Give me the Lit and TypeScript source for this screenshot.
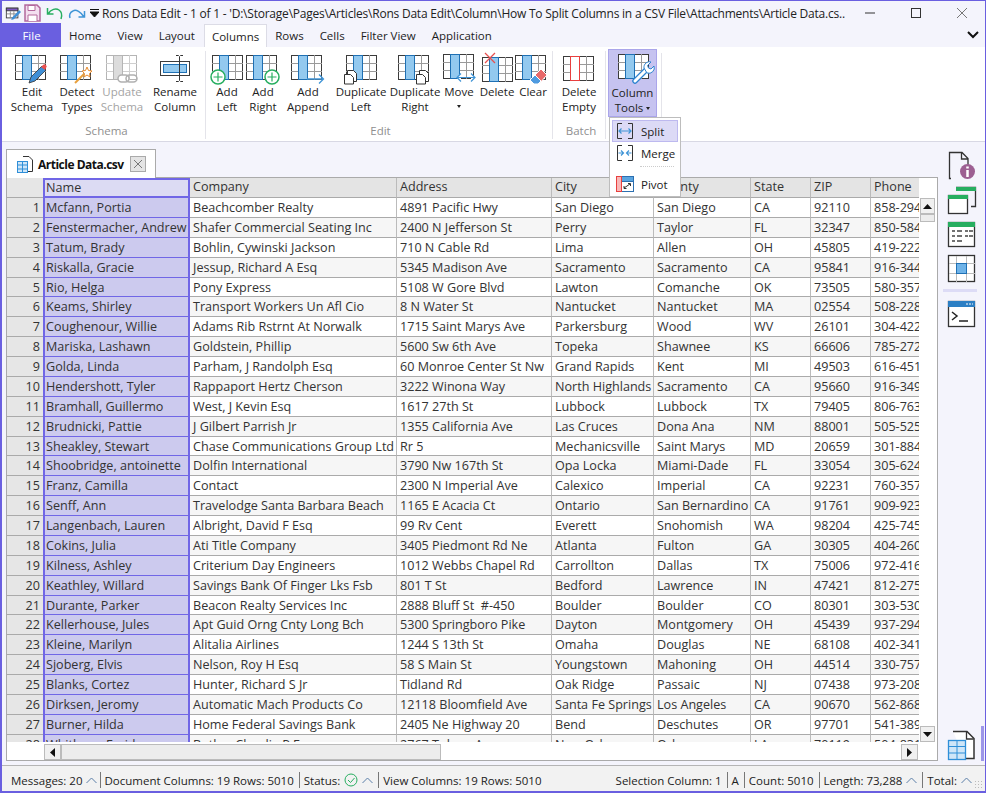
import { css, html, LitElement, svg } from 'lit';
import { customElement } from 'lit/decorators.js';

// one table icon: dark frame, grey cell lines, one highlighted column
const table = (x = 2, y = 2, frame = '#3c3c3c', fill = '#93c9ef', edge = '#1f70b4', lines = '#9a9a9a') => svg`
  <rect x=${x + 0.5} y=${y + 0.5} width="30" height="24" fill="#fff" stroke=${frame}></rect>
  <path d="M${x} ${y + 8.5}h31M${x} ${y + 16.5}h31M${x + 23.5} ${y}v25" stroke=${lines} fill="none"></path>
  <rect x=${x + 7.5} y=${y + 0.5} width="9" height="24" fill=${fill} stroke=${edge}></rect>`;

const ICONS: Record<string, unknown> = {
  edit: svg`${table(1, 2)}
    <g transform="translate(-4,-1)">
      <path d="M19 31l2-6 11-11 4 4-11 11z" fill="#3f8fd6" stroke="#333" stroke-width=".8"></path>
      <path d="M31 15l2-2a1.500 1.500 0 0 1 3 3l-1 2z" fill="#e8504f"></path>
    </g>`,
  detect: svg`${table(1, 2)}
    <path d="M16 30l9-9" stroke="#e8a13f" stroke-width="2"></path>
    <path d="M28 14l1.500 3.500 3.500.5-2.500 2.500.5 3.500-3-2-3 2 .5-3.500L23 18l3.500-.5z" fill="#fff" stroke="#e88a2c"></path>`,
  update: svg`${table(2, 2, '#b5b5b5', '#dcdcdc', '#b5b5b5', '#cfcfcf')}
    <rect x="14" y="22" width="11" height="7" rx="3.500" fill="#fff" stroke="#b0b0b0" stroke-width="1.500"></rect>
    <rect x="22" y="22" width="11" height="7" rx="3.500" fill="none" stroke="#b0b0b0" stroke-width="1.500"></rect>`,
  rename: svg`<rect x="3.500" y="8.500" width="29" height="14" fill="#fff" stroke="#3c3c3c"></rect>
    <rect x="6.500" y="11.500" width="23" height="8" fill="#93c9ef" stroke="#1f70b4"></rect>
    <path d="M19 2.500h2.500l1 1 1-1H26M22.500 4v23M19 28.500h2.500l1-1 1 1H26" fill="none" stroke="#333" stroke-width="1"></path>`,
  addLeft: svg`${table(3, 2)}
    <circle cx="9" cy="24" r="7" fill="#fff" stroke="#27ae60" stroke-width="1.500"></circle>
    <path d="M9 19.500v9M4.500 24h9" stroke="#27ae60" stroke-width="1.200"></path>`,
  addRight: svg`${table(1, 2)}
    <circle cx="27" cy="24" r="7" fill="#fff" stroke="#27ae60" stroke-width="1.500"></circle>
    <path d="M27 19.500v9M22.500 24h9" stroke="#27ae60" stroke-width="1.200"></path>`,
  append: svg`${table(1, 2)}
    <path d="M17 26h16M29 21.500l4.500 4.500-4.500 4.500" fill="none" stroke="#3f94d6" stroke-width="1.300"></path>`,
  dupLeft: svg`${table(3, 2)}
    <path d="M4.500 17.500h6l3 3v8h-9z" fill="#fff" stroke="#333"></path>
    <path d="M1.500 21.500h6l3 3v6.500h-9z" fill="#fff" stroke="#333"></path>`,
  dupRight: svg`${table(1, 2)}
    <path d="M22.500 17.500h6l3 3v8h-9z" fill="#fff" stroke="#333"></path>
    <path d="M19.500 21.500h6l3 3v6.500h-9z" fill="#fff" stroke="#333"></path>`,
  move: svg`${table(2, 1)}
    <path d="M16 24.500h18M20 20.500l-4 4 4 4M30 20.500l4 4-4 4" fill="#fff" stroke="#3f94d6" stroke-width="1.200"></path>`,
  del: svg`${table(3, 4)}
    <path d="M6 0l10 10M16 0L6 10" stroke="#e8504f" stroke-width="1.300"></path>`,
  clear: svg`${table(0, 2)}
    <path d="M15 27l11-11 6 6-8 9h-5z" fill="#e8696a" stroke="#fff"></path>
    <path d="M15 27l5-5 6 6-3 3h-4z" fill="#4f9be0" stroke="#fff"></path>`,
  empty: svg`${table(2, 3, '#3c3c3c', '#fff', '#e8403f')}`,
  tools: svg`${table(3, 0)}
    <path d="M20 27l11-11" stroke="#2c83d0" stroke-width="5.500" stroke-linecap="round"></path>
    <path d="M20 27l11-11" stroke="#fff" stroke-width="3" stroke-linecap="round"></path>
    <path d="M29 14a5.500 5.500 0 0 1 7-6l-3.500 3.500 1 2.500 2.500 1 3-3a5.500 5.500 0 0 1-7 7z" fill="#fff" stroke="#2c83d0"></path>`,
};

type Btn = { icon: string; lines: string[]; w: number; off?: boolean; caret?: boolean };

const GROUPS: { label: string; cls: string; items: Btn[] }[] = [
  {
    label: 'Schema',
    cls: 'schema',
    items: [
      { icon: 'edit', lines: ['Edit', 'Schema'], w: 48 },
      { icon: 'detect', lines: ['Detect', 'Types'], w: 42 },
      { icon: 'update', lines: ['Update', 'Schema'], w: 48, off: true },
      { icon: 'rename', lines: ['Rename', 'Column'], w: 58 },
    ],
  },
  {
    label: 'Edit',
    cls: 'edits',
    items: [
      { icon: 'addLeft', lines: ['Add', 'Left'], w: 36 },
      { icon: 'addRight', lines: ['Add', 'Right'], w: 36 },
      { icon: 'append', lines: ['Add', 'Append'], w: 54 },
      { icon: 'dupLeft', lines: ['Duplicate', 'Left'], w: 52 },
      { icon: 'dupRight', lines: ['Duplicate', 'Right'], w: 56 },
      { icon: 'move', lines: ['Move'], w: 32, caret: true },
      { icon: 'del', lines: ['Delete'], w: 44 },
      { icon: 'clear', lines: ['Clear'], w: 28 },
    ],
  },
  {
    label: 'Batch',
    cls: 'batch',
    items: [{ icon: 'empty', lines: ['Delete', 'Empty'], w: 44 }],
  },
];

const HEAD = ['Name', 'Company', 'Address', 'City', 'County', 'State', 'ZIP', 'Phone'];

const ROWS = `Mcfann, Portia|Beachcomber Realty|4891 Pacific Hwy|San Diego|San Diego|CA|92110|858-2940
Fenstermacher, Andrew|Shafer Commercial Seating Inc|2400 N Jefferson St|Perry|Taylor|FL|32347|850-5840
Tatum, Brady|Bohlin, Cywinski Jackson|710 N Cable Rd|Lima|Allen|OH|45805|419-2220
Riskalla, Gracie|Jessup, Richard A Esq|5345 Madison Ave|Sacramento|Sacramento|CA|95841|916-3440
Rio, Helga|Pony Express|5108 W Gore Blvd|Lawton|Comanche|OK|73505|580-3570
Keams, Shirley|Transport Workers Un Afl Cio|8 N Water St|Nantucket|Nantucket|MA|02554|508-2280
Coughenour, Willie|Adams Rib Rstrnt At Norwalk|1715 Saint Marys Ave|Parkersburg|Wood|WV|26101|304-4220
Mariska, Lashawn|Goldstein, Phillip|5600 Sw 6th Ave|Topeka|Shawnee|KS|66606|785-2720
Golda, Linda|Parham, J Randolph Esq|60 Monroe Center St Nw|Grand Rapids|Kent|MI|49503|616-4510
Hendershott, Tyler|Rappaport Hertz Cherson|3222 Winona Way|North Highlands|Sacramento|CA|95660|916-3490
Bramhall, Guillermo|West, J Kevin Esq|1617 27th St|Lubbock|Lubbock|TX|79405|806-7630
Brudnicki, Pattie|J Gilbert Parrish Jr|1355 California Ave|Las Cruces|Dona Ana|NM|88001|505-5250
Sheakley, Stewart|Chase Communications Group Ltd|Rr 5|Mechanicsville|Saint Marys|MD|20659|301-8840
Shoobridge, antoinette|Dolfin International|3790 Nw 167th St|Opa Locka|Miami-Dade|FL|33054|305-6240
Franz, Camilla|Contact|2300 N Imperial Ave|Calexico|Imperial|CA|92231|760-3570
Senff, Ann|Travelodge Santa Barbara Beach|1165 E Acacia Ct|Ontario|San Bernardino|CA|91761|909-9230
Langenbach, Lauren|Albright, David F Esq|99 Rv Cent|Everett|Snohomish|WA|98204|425-7450
Cokins, Julia|Ati Title Company|3405 Piedmont Rd Ne|Atlanta|Fulton|GA|30305|404-2600
Kilness, Ashley|Criterium Day Engineers|1012 Webbs Chapel Rd|Carrollton|Dallas|TX|75006|972-4160
Keathley, Willard|Savings Bank Of Finger Lks Fsb|801 T St|Bedford|Lawrence|IN|47421|812-2750
Durante, Parker|Beacon Realty Services Inc|2888 Bluff St  #-450|Boulder|Boulder|CO|80301|303-5300
Kellerhouse, Jules|Apt Guid Orng Cnty Long Bch|5300 Springboro Pike|Dayton|Montgomery|OH|45439|937-2940
Kleine, Marilyn|Alitalia Airlines|1244 S 13th St|Omaha|Douglas|NE|68108|402-3410
Sjoberg, Elvis|Nelson, Roy H Esq|58 S Main St|Youngstown|Mahoning|OH|44514|330-7570
Blanks, Cortez|Hunter, Richard S Jr|Tidland Rd|Oak Ridge|Passaic|NJ|07438|973-2080
Dirksen, Jeromy|Automatic Mach Products Co|12118 Bloomfield Ave|Santa Fe Springs|Los Angeles|CA|90670|562-8680
Burner, Hilda|Home Federal Savings Bank|2405 Ne Highway 20|Bend|Deschutes|OR|97701|541-3890
Whitham, Freida|Butler, Claudia P Esq|2767 Tulane Ave|New Orleans|Orleans|LA|70119|504-8310`
  .split('\n')
  .map((r) => r.split('|'));

const up = html`<svg class="chev" width="11" height="7" viewBox="0 0 11 7"><path d="M.5 6l5-5 5 5" fill="none" stroke="#5a7fa8"></path></svg>`;

@customElement('app-root')
export class AppRoot extends LitElement {
  public static styles = css`
    :host {
      display: flex;
      flex-direction: column;
      width: 986px;
      height: 793px;
      box-sizing: border-box;
      overflow: hidden;
      background: #f4f4fc;
      border: solid #6a5fe0;
      border-width: 1px 1px 2px 2px;
      font: 11.5px 'Open Sans', 'Liberation Sans', sans-serif;
      color: #2b2b2b;
    }

    svg {
      display: block;
      flex: none;
    }

    .title {
      display: flex;
      align-items: center;
      height: 22px;
      flex: none;
      box-sizing: border-box;
      padding-top: 2px;
      white-space: nowrap;
    }

    .qat {
      display: flex;
      align-items: center;
      gap: 3px;
      padding-left: 3px;
      width: 88px;
      flex: none;
      box-sizing: border-box;
    }

    .undo {
      margin-left: 2px;
    }

    .redo {
      margin-left: 1px;
    }

    .drop {
      margin-right: 3px;
    }

    .caption {
      width: 743px;
      flex: none;
      overflow: hidden;
      font-size: 12px;
      letter-spacing: -0.22px;
      color: #222;
    }

    .win {
      display: flex;
      flex: 1;
      justify-content: space-around;
      padding-left: 2px;
    }

    .tabs {
      display: flex;
      align-items: stretch;
      height: 24px;
      flex: none;
      color: #1c1c1c;
    }

    .tab {
      display: flex;
      align-items: center;
      padding: 0 8px;
    }

    .file {
      width: 59px;
      justify-content: center;
      background: #6a5fe0;
      color: #fff;
      box-sizing: border-box;
    }

    .sel {
      margin: 1px 0 0 1px;
      padding: 0 7px;
      background: #fff;
      color: #222;
      border: 1px solid #dcdce6;
      border-bottom: 0;
    }

    .more {
      margin-left: auto;
      margin-right: 6px;
      align-self: center;
    }

    .ribbon {
      display: flex;
      align-items: stretch;
      height: 95px;
      flex: none;
      box-sizing: border-box;
      padding: 2px 0 2px 6px;
      background: #fff;
      border-bottom: 1px solid #d8d8e4;
    }

    .group {
      display: flex;
      flex-direction: column;
      align-items: stretch;
      border-right: 1px solid #e4e4ea;
      margin-top: 2px;
    }

    .schema {
      width: 197px;
    }

    .edits {
      width: 347px;
      padding-left: 3px;
      box-sizing: border-box;
    }

    .batch {
      width: 53px;
      padding-left: 4px;
      box-sizing: border-box;
    }

    .btns {
      display: flex;
      flex: 1;
    }

    .glabel {
      text-align: center;
      color: #8f8f8f;
      line-height: 16px;
    }

    .btn {
      display: flex;
      flex-direction: column;
      align-items: center;
      flex: none;
      box-sizing: border-box;
      padding-top: 1px;
      line-height: 15px;
      color: #222;
    }

    .btn svg {
      overflow: visible;
    }

    .off {
      color: #a4a4a4;
    }

    .caret {
      width: 0;
      height: 0;
      margin: 6px 0 0;
      border: 2.500px solid transparent;
      border-top: 3px solid #222;
      border-bottom: 0;
    }

    .inline {
      display: inline-block;
      margin: 0 0 2px 3px;
    }

    .tools {
      position: relative;
      width: 49px;
      margin: 0 4px 0 2px;
      height: 68px;
      background: #c6c3f0;
      border: 1px solid #aaa5ea;
      box-sizing: border-box;
      padding-top: 3px;
    }

    .rsep {
      width: 1px;
      height: 86px;
      margin-top: 4px;
      background: #e4e4ea;
    }

    .menu {
      position: absolute;
      left: 0;
      top: 67px;
      z-index: 5;
      width: 72px;
      height: 80px;
      box-sizing: border-box;
      padding: 2px;
      background: #fff;
      border: 1px solid #bdbdbd;
      color: #222;
    }

    .mi {
      display: flex;
      align-items: center;
      gap: 7px;
      height: 22px;
      padding-left: 4px;
      box-sizing: border-box;
    }

    .hot {
      background: #dcdaf6;
      border: 1px solid #bdb9ef;
      padding-left: 3px;
    }

    .dots {
      margin: 2px 4px 6px 28px;
      border-top: 1px dotted #ccc;
    }

    .main {
      display: flex;
      flex: 1;
      min-height: 0;
      padding: 7px 0 4px 4px;
    }

    .doc {
      display: flex;
      flex-direction: column;
      width: 932px;
      flex: none;
    }

    .docstrip {
      display: flex;
      height: 28px;
      flex: none;
    }

    .doctab {
      display: flex;
      align-items: center;
      width: 150px;
      height: 29px;
      position: relative;
      z-index: 1;
      box-sizing: border-box;
      padding-left: 9px;
      gap: 4px;
      background: #fff;
      border: 1px solid #aaa;
      border-bottom: 0;
      font-size: 12px;
      font-weight: 700;
      letter-spacing: -0.5px;
      white-space: nowrap;
      color: #111;
    }

    .x {
      display: flex;
      align-items: center;
      justify-content: center;
      width: 16px;
      height: 16px;
      margin: 0 9px 0 auto;
      background: #e4e4e4;
      border: 1px solid #aaa;
      box-sizing: border-box;
    }

    .box {
      display: flex;
      flex-direction: column;
      flex: 1;
      min-height: 0;
      background: #fff;
      border: 1px solid #aaa;
    }

    .upper {
      display: flex;
      height: 564px;
      flex: none;
    }

    .view {
      width: 912px;
      flex: none;
      overflow: hidden;
      font-size: 12.6px;
    }

    .row {
      display: grid;
      grid-template-columns: 36px 147px 207px 155px 102px 97px 60px 60px 48px;
      height: 19.885px;
      color: #333;
    }

    .row:nth-child(odd) {
      background: #f6f6f6;
    }

    .row:nth-child(even) {
      background: #fff;
    }

    .hd,
    .hd:nth-child(odd) {
      height: 20px;
      background: #e4e4e4;
    }

    .c {
      overflow: hidden;
      white-space: pre;
      box-sizing: border-box;
      padding-left: 3px;
      line-height: 20px;
      border-right: 1px solid #bbb;
      border-bottom: 1px solid #aaa;
    }

    .hd .c {
      line-height: 18px;
    }

    .c:last-child {
      border-right: 0;
    }

    .num {
      padding: 0 3px 0 0;
      text-align: right;
      background: #e6e6e6;
      border-right: 0;
    }

    .nm {
      padding-left: 1px;
      background: #cccaee;
      border: solid #7066e6;
      border-width: 0 2px 1px;
    }

    .hd .nm {
      background: #dcdbf3;
      border-width: 2px 2px 2px;
      line-height: 16px;
    }

    .vbar {
      display: flex;
      flex-direction: column;
      width: 15px;
      margin: 20px 0 0 1px;
      flex: none;
    }

    .sb {
      display: flex;
      align-items: center;
      justify-content: center;
      width: 15px;
      height: 16px;
      flex: none;
      box-sizing: border-box;
      background: #f0f0f0;
      border: 1px solid #bbb;
    }

    .thumb {
      height: 8px;
      flex: none;
      box-sizing: border-box;
      background: #ececec;
      border: 1px solid #bbb;
    }

    .fill {
      flex: 1;
    }

    .hbar {
      display: flex;
      height: 16px;
      margin: 2px 0 0 37px;
      width: 874px;
      flex: none;
    }

    .hbar .sb {
      width: 17px;
    }

    .hthumb {
      width: 380px;
      box-sizing: border-box;
      background: #ececec;
      border: 1px solid #bbb;
    }

    .side {
      display: flex;
      flex-direction: column;
      align-items: flex-start;
      flex: 1;
      padding: 2px 0 0 9px;
    }

    .side svg {
      margin-bottom: 5px;
    }

    .divider {
      width: 34px;
      height: 3px;
      margin: 0 0 8px -4px;
      background: #dddcf6;
    }

    .tail {
      display: flex;
      align-items: flex-start;
      margin-top: auto;
      gap: 4px;
    }

    .tail svg {
      margin: 4px 0 0;
    }

    .accent {
      width: 3px;
      height: 35px;
      background: #9d96e8;
    }

    .status {
      display: flex;
      align-items: center;
      height: 26px;
      flex: none;
      position: relative;
      box-sizing: border-box;
      padding: 3px 0 0 9px;
      background: #f2f2f2;
      border-top: 1px solid #b5b5b5;
      white-space: nowrap;
      color: #222;
    }

    .si {
      display: flex;
      align-items: center;
      gap: 4px;
      height: 16px;
      padding: 0 5px 0 4px;
      border-right: 1px solid #777;
    }

    .si:first-child {
      gap: 3px;
      padding: 0 3px 0 0;
    }

    .si.bare {
      border-right: 0;
    }

    .total {
      margin-right: 8px;
    }

    .push {
      margin-left: auto;
    }

    .grip {
      position: absolute;
      right: 1px;
      bottom: 1px;
      width: 10px;
      height: 10px;
      background: radial-gradient(circle, #bbb 1px, transparent 1px) 0 0 / 3px 3px;
    }
  `;

  private qat() {
    return html`<div class="qat">
      <svg width="16" height="18" viewBox="0 0 18 18">
        <rect x="1.500" y="3.500" width="13" height="11" fill="#fff" stroke="#3c3c3c"></rect>
        <rect x="1.500" y="3.500" width="13" height="3" fill="#7e57c2" stroke="#3c3c3c"></rect>
        <path d="M2 10h12M6 7v7M10 7v7" stroke="#888"></path>
        <path d="M7 17l1-3 8-8 2 2-8 8z" fill="#3f8fd6"></path>
      </svg>
      <svg width="17" height="18" viewBox="0 0 17 18">
        <path d="M1 1h12l3 3v13H1z" fill="#f3dff0" stroke="#b3689c" stroke-width="1.500"></path>
        <path d="M4 1.500h7v5H4zM4 17v-6h9v6" fill="#fff" stroke="#b3689c"></path>
      </svg>
      <svg class="undo" width="18" height="14" viewBox="0 0 18 14">
        <path d="M1.500 2v6h6M2 8c3-5 8-6 11-4 3 2 3 6 2 9" fill="none" stroke="#27ae60" stroke-width="1.500"></path>
      </svg>
      <svg class="redo" width="18" height="14" viewBox="0 0 18 14">
        <path d="M16.500 5v6h-6M16 11c-3-5-8-8-11-6C2 6 1 9 2 12" fill="none" stroke="#3f94d6" stroke-width="1.500"></path>
      </svg>
    </div>`;
  }

  private icon(name: string) {
    return html`<svg width="36" height="32" viewBox="0 -1 36 32">${ICONS[name]}</svg>`;
  }

  private button(b: Btn) {
    return html`<div class="btn ${b.off ? 'off' : ''}" style="width:${b.w}px">
      ${this.icon(b.icon)} ${b.lines.map((l) => html`<span>${l}</span>`)}
      ${b.caret ? html`<span class="caret"></span>` : ''}
    </div>`;
  }

  private menu() {
    return html`<div class="menu">
      <div class="mi hot">
        <svg width="18" height="18" viewBox="0 0 18 18">
          <path d="M6 1.500H1.500v15H6M12 1.500h4.500v15H12" fill="none" stroke="#333"></path>
          <path d="M3 9h12M5.500 6.500L3 9l2.500 2.500M12.500 6.500L15 9l-2.500 2.500" fill="none" stroke="#3f94d6" stroke-width="1.200"></path>
        </svg>
        <span>Split</span>
      </div>
      <div class="mi">
        <svg width="18" height="18" viewBox="0 0 18 18">
          <path d="M6 1.500H1.500v15H6M12 1.500h4.500v15H12" fill="none" stroke="#333"></path>
          <path d="M2.500 9h5M5 6.500L7.500 9 5 11.500M15.500 9h-5M13 6.500L10.500 9l2.500 2.500" fill="none" stroke="#3f94d6" stroke-width="1.200"></path>
        </svg>
        <span>Merge</span>
      </div>
      <div class="dots"></div>
      <div class="mi">
        <svg width="18" height="18" viewBox="0 0 18 18">
          <rect x=".5" y="1.500" width="17" height="15" fill="#fff" stroke="#2c6fb0"></rect>
          <rect x=".5" y="1.500" width="17" height="5" fill="#5aa5e0" stroke="#2c6fb0"></rect>
          <rect x=".5" y="1.500" width="5" height="15" fill="#f8b8b8" stroke="#e8403f"></rect>
          <path d="M8 13l6-4M12 8.500h2.500V11M8 11v2.500h2.500" fill="none" stroke="#333"></path>
        </svg>
        <span>Pivot</span>
      </div>
    </div>`;
  }

  private grid() {
    return html`<div class="view">
      <div class="row hd">
        <div class="c num"></div>
        ${HEAD.map((h, i) => html`<div class="c ${i === 0 ? 'nm' : ''}">${h}</div>`)}
      </div>
      ${ROWS.map(
        (r, n) => html`<div class="row">
          <div class="c num">${n + 1}</div>
          ${r.map((v, i) => html`<div class="c ${i === 0 ? 'nm' : ''}">${v}</div>`)}
        </div>`
      )}
    </div>`;
  }

  private side() {
    return html`<div class="side">
      <svg width="30" height="30" viewBox="0 0 30 30">
        <path d="M4 27.500H2.500V1.500H15l6 6v9M14.500 2v6h6" fill="none" stroke="#333" stroke-width="1.300"></path>
        <circle cx="20.500" cy="20.500" r="7.500" fill="#9c5f92"></circle>
        <path d="M20.500 15.500v2M20.500 19v7" stroke="#fff" stroke-width="2.500"></path>
      </svg>
      <svg width="30" height="30" viewBox="0 0 30 30">
        <path d="M9 1.500h19.500v19H24" fill="none" stroke="#333" stroke-width="1.300"></path>
        <rect x="9" y="1" width="20" height="4" fill="#27ae60"></rect>
        <rect x="1.500" y="9.500" width="19" height="18" fill="#fff" stroke="#333" stroke-width="1.300"></rect>
        <rect x="1" y="9" width="20" height="4" fill="#27ae60"></rect>
      </svg>
      <svg width="30" height="28" viewBox="0 0 30 28">
        <rect x="1.500" y="1.500" width="26" height="24" fill="#fff" stroke="#333" stroke-width="1.300"></rect>
        <rect x="1" y="1" width="27" height="5" fill="#27ae60"></rect>
        <path d="M5 10h3M10 10h5M18 10h3M22 10h4M5 15h3M10 15h5M18 15h3M22 15h4M5 20h3M10 20h5" stroke="#444" stroke-width="1.500"></path>
      </svg>
      <svg width="30" height="30" viewBox="0 0 30 30">
        <rect x="1.500" y="1.500" width="26" height="26" fill="#fff" stroke="#333" stroke-width="1.300"></rect>
        <path d="M9.500 2v26M19.500 2v26M2 9.500h26M2 19.500h26" stroke="#bbb"></path>
        <rect x="9.500" y="9.500" width="10" height="10" fill="#6fb3e8" stroke="#1f70b4"></rect>
      </svg>
      <div class="divider"></div>
      <svg width="30" height="28" viewBox="0 0 30 28">
        <rect x="1.500" y="1.500" width="26" height="25" fill="#fff" stroke="#333" stroke-width="1.300"></rect>
        <rect x="1" y="1" width="27" height="6" fill="#2c7fc4"></rect>
        <path d="M19 4h2M22 4h2M25 4h1" stroke="#fff"></path>
        <path d="M5 12l5 4-5 4M12 21h9" fill="none" stroke="#222" stroke-width="1.500"></path>
      </svg>
      <div class="tail">
        <svg width="30" height="31" viewBox="0 0 30 31">
          <path d="M6 1.500h14l7 7v20H18" fill="#fff" stroke="#333" stroke-width="1.500"></path>
          <path d="M19.500 2v7h7" fill="none" stroke="#333" stroke-width="1.300"></path>
          <rect x="1.500" y="10.500" width="17" height="19" fill="#cfe6f8" stroke="#2f8fd8" stroke-width="1.300"></rect>
          <path d="M2 16.500h16M2 23h16M10 11v18" stroke="#2f8fd8"></path>
        </svg>
        <div class="accent"></div>
      </div>
    </div>`;
  }

  public render() {
    return html`
      <div class="title">
        ${this.qat()}
        <svg class="drop" width="9" height="8" viewBox="0 0 9 8">
          <path d="M0 .5h9M0 3h9L4.500 8z" stroke="#111" fill="#111"></path>
        </svg>
        <div class="caption">
          Rons Data Edit - 1 of 1 - 'D:\\Storage\\Pages\\Articles\\Rons Data Edit\\Column\\How To Split Columns in a CSV File\\Attachments\\Article Data.cs..
        </div>
        <div class="win">
          <svg width="12" height="12" viewBox="0 0 12 12"><path d="M1 6h10" stroke="#333"></path></svg>
          <svg width="12" height="12" viewBox="0 0 12 12"><rect x="1.500" y="1.500" width="9" height="9" fill="none" stroke="#333"></rect></svg>
          <svg width="12" height="12" viewBox="0 0 12 12"><path d="M1 1l10 10M11 1L1 11" stroke="#777"></path></svg>
        </div>
      </div>
      <div class="tabs">
        <div class="tab file">File</div>
        <div class="tab">Home</div>
        <div class="tab">View</div>
        <div class="tab">Layout</div>
        <div class="tab sel">Columns</div>
        <div class="tab">Rows</div>
        <div class="tab">Cells</div>
        <div class="tab">Filter View</div>
        <div class="tab">Application</div>
        <svg class="more" width="12" height="8" viewBox="0 0 12 8"><path d="M1 1l5 5 5-5" fill="none" stroke="#111" stroke-width="2"></path></svg>
      </div>
      <div class="ribbon">
        ${GROUPS.map(
          (g) => html`<div class="group ${g.cls}">
            <div class="btns">${g.items.map((b) => this.button(b))}</div>
            <div class="glabel">${g.label}</div>
          </div>`
        )}
        <div class="btn tools">
          ${this.icon('tools')}
          <span>Column</span>
          <span>Tools<span class="caret inline"></span></span>
          ${this.menu()}
        </div>
        <div class="rsep"></div>
      </div>
      <div class="main">
        <div class="doc">
          <div class="docstrip">
            <div class="doctab">
              <svg width="18" height="20" viewBox="0 0 18 20">
                <path d="M7 2.500h6l3.500 3.500v11.500H12" fill="none" stroke="#333"></path>
                <rect x="1.500" y="7.500" width="10" height="11" fill="#cfe6f8" stroke="#2f8fd8"></rect>
                <path d="M2 11h9M2 15h9M6.500 8v10" stroke="#2f8fd8"></path>
              </svg>
              <span>Article Data.csv</span>
              <div class="x">
                <svg width="10" height="10" viewBox="0 0 10 10"><path d="M1 1l8 8M9 1L1 9" stroke="#777"></path></svg>
              </div>
            </div>
          </div>
          <div class="box">
            <div class="upper">
              ${this.grid()}
              <div class="vbar">
                <div class="sb"><svg width="9" height="5" viewBox="0 0 9 5"><path d="M4.500 0L9 5H0z" fill="#111"></path></svg></div>
                <div class="thumb"></div>
                <div class="fill"></div>
                <div class="sb"><svg width="9" height="5" viewBox="0 0 9 5"><path d="M4.500 5L9 0H0z" fill="#111"></path></svg></div>
              </div>
            </div>
            <div class="hbar">
              <div class="sb"><svg width="5" height="9" viewBox="0 0 5 9"><path d="M0 4.500L5 0v9z" fill="#111"></path></svg></div>
              <div class="hthumb"></div>
              <div class="fill"></div>
              <div class="sb"><svg width="5" height="9" viewBox="0 0 5 9"><path d="M5 4.500L0 0v9z" fill="#111"></path></svg></div>
            </div>
          </div>
        </div>
        ${this.side()}
      </div>
      <div class="status">
        <div class="si">Messages: 20 ${up}</div>
        <div class="si">Document Columns: 19 Rows: 5010</div>
        <div class="si">
          Status:
          <svg width="14" height="14" viewBox="0 0 14 14">
            <circle cx="7" cy="7" r="6" fill="none" stroke="#27ae60"></circle>
            <path d="M4 7l2.500 2.500L10.500 5" fill="none" stroke="#27ae60"></path>
          </svg>
          ${up}
        </div>
        <div class="si bare">View Columns: 19 Rows: 5010</div>
        <div class="si push">Selection Column: 1</div>
        <div class="si">A</div>
        <div class="si">Count: 5010</div>
        <div class="si">Length: 73,288 ${up}</div>
        <div class="si bare total">Total: ${up}</div>
        <div class="grip"></div>
      </div>
    `;
  }
}

declare global {
  interface HTMLElementTagNameMap {
    'app-root': AppRoot;
  }
}
